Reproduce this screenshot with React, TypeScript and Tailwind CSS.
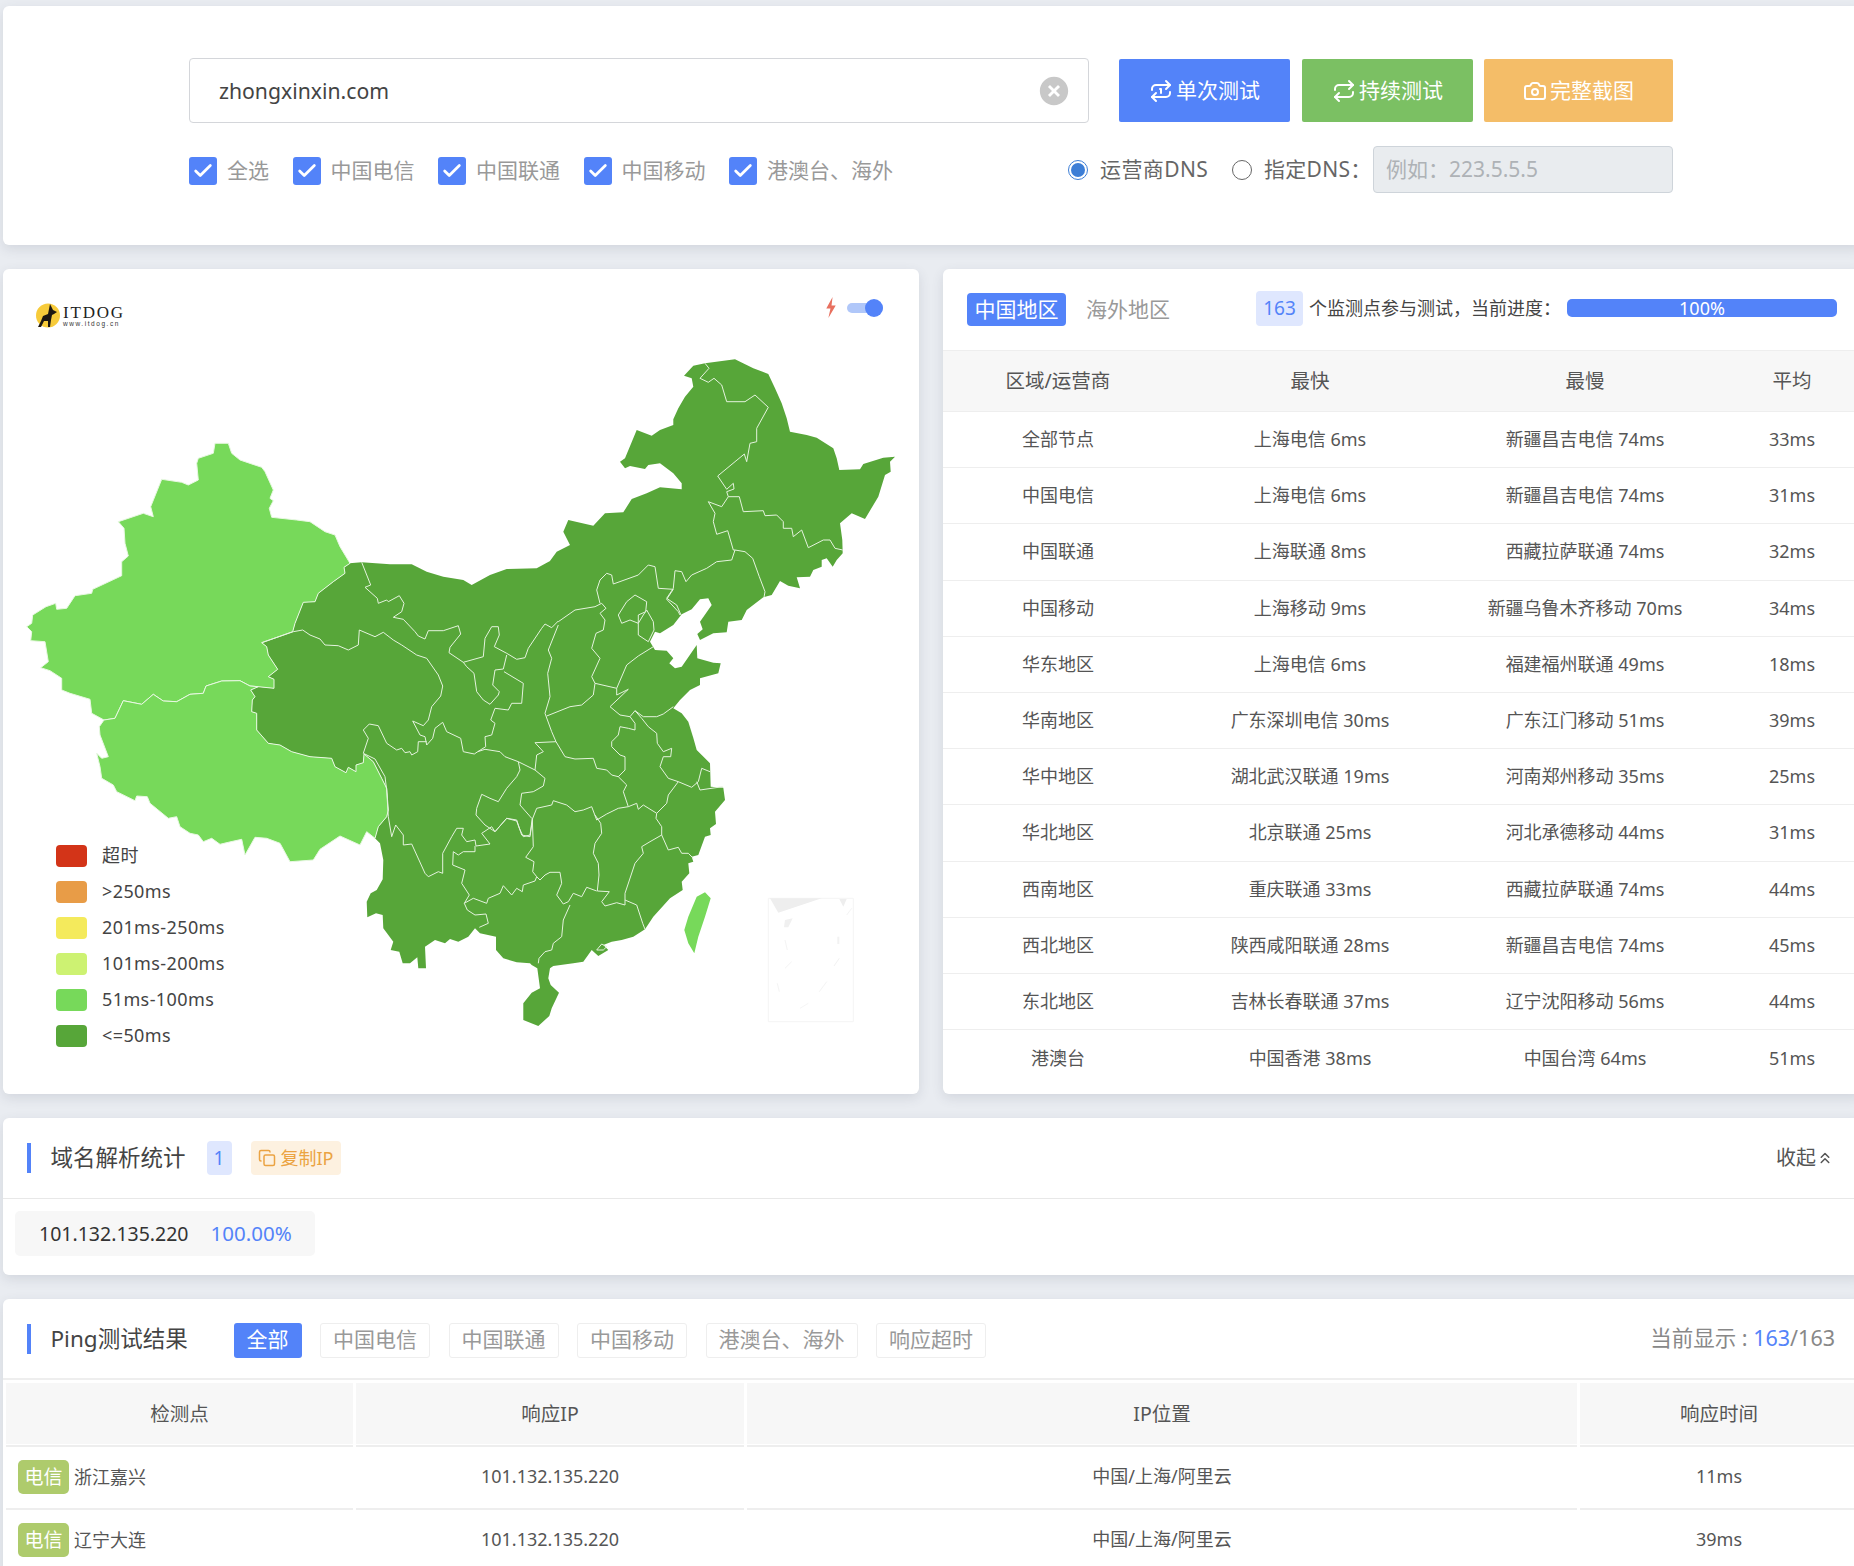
import { RiCloseCircleFill } from "react-icons/ri";
import { Copy, Check, Repeat, Repeat1, Camera, ChevronsUp } from "lucide-react";

const BLUE = "#5383f9";

// map points were read off crops of the picture at 3x, so convert back to page pixels
const at = (ox: number, oy: number, s: string) =>
	s
		.trim()
		.split(/\s+/)
		.map(p => {
			const [x, y] = p.split(",").map(Number);
			return `${(ox + x / 3).toFixed(1)},${(oy + y / 3).toFixed(1)}`;
		})
		.join(" ");
const west = (s: string) => at(20, 430, s);
const north = (s: string) => at(460, 350, s);
const mid = (s: string) => at(250, 560, s);
const south = (s: string) => at(360, 720, s);

const tibetEast =
	"1065,1225 1075,1190 1100,1160 1105,1140 1100,1075 1085,1045 1060,995 1032,972 1030,998 1008,1005 1008,1025 985,1012 978,1028 945,1010 935,985 870,980 815,965 780,945 745,940 710,900 710,850 695,845 697,810 705,800 692,780 715,770";
const xinjiangEast =
	"715,770 762,775 762,748 745,740 773,718 745,675 740,650 725,638 818,605 825,580 850,517 885,515 895,490 940,455 975,430 972,412 990,400";

const xinjiang = west(
	`990,400 960,350 945,315 915,305 870,275 830,270 755,262 748,235 760,212 750,205 760,180 735,125 725,112 660,90 635,70 625,40 585,40 580,70 535,85 530,100 535,150 505,165 485,157 425,148 392,230 400,260 370,250 295,275 312,295 315,340 325,378 305,395 305,437 218,478 215,490 165,497 140,535 110,538 107,520 78,530 38,555 35,580 20,590 35,605 32,632 75,635 85,695 62,713 90,722 125,745 125,780 150,790 210,808 215,850 252,870 285,865 310,812 365,823 400,793 430,813 470,815 510,793 550,790 558,768 605,753 660,752 690,768 ${xinjiangEast}`
);
const tibet = west(
	`252,870 238,890 240,915 265,980 245,985 230,970 240,1010 245,1045 280,1065 290,1085 345,1112 350,1098 382,1100 390,1120 445,1165 470,1160 480,1190 510,1210 535,1215 550,1235 575,1225 600,1243 625,1237 665,1228 675,1275 705,1222 740,1225 780,1240 810,1295 880,1290 900,1258 960,1218 1020,1245 1040,1205 ${tibetEast} 690,768 660,752 605,753 558,768 550,790 510,793 470,815 430,813 400,793 365,823 310,812 285,865`
);

const mainland = [
	mid("335,7 420,13 485,13 530,35 580,50 640,60 665,75 720,45 770,27 860,25 900,3"),
	north(
		"265,640 290,605 330,585 310,545 325,510 400,527 435,490 490,487 515,447 560,430 600,412 665,418 665,400 640,370 600,340 565,345 555,357 510,348 495,355 480,335 495,325 530,240 575,257 600,240 640,225 640,208 655,175 675,140 700,110 695,85 672,77 700,47 735,40 825,28 880,55 925,72 945,115 965,160 980,205 990,245 1040,255 1070,263 1120,295 1130,325 1138,360 1200,358 1210,342 1270,323 1305,320 1290,335 1292,365 1275,375 1255,440 1215,507 1175,490 1140,520 1147,570 1148,610 1130,630 1118,650 1100,625 1085,630 1085,650 1060,660 1050,680 1010,682 1020,715 985,707 960,693 935,735 910,742 860,780 845,810 805,815 800,847 760,850 720,870 712,852 728,838 720,815 755,765 745,745 720,748 695,778 665,793 640,825 600,850 585,845 570,875 585,900 620,902 640,925 628,940 645,955 665,950 710,885 712,925 760,938 782,940 775,970 720,985 720,1005 690,1020 660,1050 640,1075 665,1090 685,1115 700,1165"
	),
	south(
		"985,0 1010,90 1050,130 1052,200 1090,203 1095,240 1065,275 1068,312 1050,325 1052,345 1035,350 1015,405 995,410 1000,425 985,430 988,460 965,485 968,510 930,535 880,590 855,628 820,650 785,660 755,665 730,675 745,690 715,708 695,690 670,725 640,730 580,738 570,745 565,775 572,795 597,818 575,865 568,888 535,918 490,900 490,850 515,818 540,805 532,745 515,735 510,730 470,727 430,715 408,690 408,650 360,640 345,625 325,650 295,665 270,657 255,670 225,660 195,680 198,745 175,745 172,712 150,730 128,730 118,695 92,690 100,665 70,625 68,585 48,580 22,592 20,545 32,520 50,510 68,478 70,420 60,370"
	),
	west(`${tibetEast} ${xinjiangEast}`),
	mid("298,10")
].join(" ");

const borders = [
	// 内蒙古、甘肃、宁夏
	mid("335,7 362,75 345,82 382,115 385,130 410,120 415,125 448,107 462,130 455,155 430,172 460,178 495,215 505,228 525,237 535,212 580,212 625,197 632,222 600,262 597,278 640,307 700,290 705,235 725,200 745,200 748,225 733,260 770,280 800,298 825,293 835,265 875,205 885,192 905,203 925,183"),
	mid("640,307 650,320 672,340 680,395 700,420 720,433 745,405 748,395 728,375 735,330 760,327 770,285"),
	mid("762,335 820,370 815,430 785,430 775,450 735,445 722,480 735,490 725,525 705,530 707,560 683,575 673,582 640,575 632,535 590,515 578,487 555,505 548,535 530,555"),
	// 青海
	mid("35,248 130,215 158,210 180,225 210,237 225,255 265,257 295,270 325,255 328,210 375,230 400,217 430,240 455,255 500,285 530,295 565,345 578,378 572,408 545,440 535,480 520,497 488,483 510,525 525,530 530,555"),
	mid("340,580 355,535 340,510 358,492 385,497 410,550 440,570 455,565 465,578 480,575 485,585 503,575 505,545 530,545"),
	mid("340,580 375,597 405,650 410,690 415,770"),
	// 四川、重庆
	mid("683,575 705,568 750,575 765,590 805,605 855,630"),
	mid("805,605 810,630 800,650 770,685 745,725 720,715 695,703 680,745 678,765 705,795 735,815 770,775 800,780 815,825 840,830 848,775"),
	mid("855,630 885,655 880,678 850,695 815,700 810,735 845,775"),
	// 陕西、山西、河南
	mid("925,195 895,270 905,295 893,340 900,410 885,460 905,515 918,545"),
	mid("925,185 975,150 1035,140 1055,130 1068,145 1050,160 1065,180 1060,210 1038,220 1025,265 1050,295 1025,350 1035,370 1100,385"),
	mid("890,468 960,440 995,435 1030,405 1035,370"),
	mid("918,545 945,590 975,597 1030,595 1040,625 1070,630 1085,645 1105,650"),
	mid("918,545 855,548 880,575 860,585 855,630"),
	// 湖北、安徽、江苏、山东
	mid("848,775 860,745 905,735 910,722 950,735 975,755 1000,750 1025,740 1040,780 1070,762 1105,745 1135,740"),
	mid("1105,650 1130,675 1120,695 1135,740 1160,730 1165,748 1180,735 1220,760"),
	mid("1105,650 1125,630 1125,590 1110,585 1085,560 1085,545 1105,525 1110,500 1135,505 1155,510 1155,490 1140,470 1110,465 1080,440 1135,388 1100,405 1100,385 1130,315 1165,288 1210,260"),
	mid("1140,470 1155,452 1175,475 1195,500 1220,520 1222,550 1240,575 1265,565 1262,590 1240,590 1230,620 1255,655 1285,665 1325,682 1345,665 1355,625 1380,635"),
	mid("1340,665 1350,690 1418,680"),
	mid("1285,665 1255,705 1250,730 1220,760"),
	mid("1155,452 1180,470 1220,470 1240,462 1270,440"),
	// 河北、北京、天津
	mid("1050,130 1040,90 1050,60 1070,40 1085,45 1090,72 1165,45 1195,15 1215,20 1225,85 1270,88 1250,118 1285,155 1290,165"),
	mid("1105,165 1130,125 1155,105 1190,125 1187,155 1165,165 1165,190 1140,180 1115,190 1105,165"),
	mid("1190,150 1210,185 1212,210 1195,245 1165,225 1165,190 1180,165 1190,150"),
	// 东北
	north("735,40 747,55 720,85 745,97 762,85 785,105 800,155 855,155 885,135 925,172 890,235 890,275 870,280 860,335 853,312 773,378 800,418 820,400 822,417 800,425 805,440 838,440 850,485 910,482 915,497 950,495 970,515 970,535 995,535 1000,560 1025,540 1045,593 1090,570 1110,570 1125,595 1148,600"),
	north("805,440 785,470 745,455 765,490 760,515 770,553 803,542 820,600 825,600 855,605 878,625 898,680 915,725 912,742"),
	north("825,600 815,630 770,635 740,655 695,675 678,695 665,665 645,662 640,715 620,745 650,765 663,795"),
	// 西南
	south("85,290 95,350 107,315 130,345 130,375 155,372 195,460 205,470 235,455 248,460 248,400 275,350 290,325 310,325 305,345 320,365 345,360 348,378 390,372 365,340 395,320 405,335 440,295 470,303 478,325 490,350 510,345 517,295"),
	south("345,378 345,395 310,395 295,405 280,395 278,435 315,450 305,490 328,525 313,550 340,535 380,550 385,535 420,520 430,497 455,525 470,505 487,515 490,495 525,483 530,470 540,480 555,465 570,457 600,457 605,490 590,525 610,552 625,545 640,520 665,530 680,502 710,513"),
	south("313,550 322,570 345,585 378,582 385,610 358,622"),
	south("630,555 610,600 605,650 580,670 575,690 555,695 537,715 535,730"),
	south("517,295 520,380 497,412 522,425 518,455 530,470"),
	south("705,285 722,310 725,340 705,370 700,400 715,430 717,465 712,513 748,515 725,545 735,558 770,548 795,555"),
	south("795,555 795,520 825,430 850,400 845,380 870,365 905,345 925,390 955,382 965,400 985,400 1000,415"),
	south("795,540 830,555 848,610 855,628"),
	south("905,345 905,320 888,295 890,280"),
	south("710,690 725,672 740,680 730,690 710,690")
];

const taiwan = south("1035,517 1052,535 1035,590 1015,650 1003,700 985,670 973,630 985,590 1010,530");

const ChinaMap = () => (
	<svg viewBox="3 269 916 825" className="absolute left-0 top-0 w-[916px] h-[825px]">
		<polygon points={mainland} fill="#57a639" />
		<polygon points={xinjiang} fill="#77d95a" stroke="#e8f8e2" strokeWidth="1" strokeLinejoin="round" />
		<polygon points={tibet} fill="#77d95a" stroke="#e8f8e2" strokeWidth="1" strokeLinejoin="round" />
		{borders.map((b, i) => (
			<polyline key={i} points={b} fill="none" stroke="#e4f3dd" strokeWidth="1" strokeLinejoin="round" />
		))}
		<polygon points={taiwan} fill="#77d95a" />
		{/* 南海诸岛小图 */}
		<polygon points={south("1225,535 1480,535 1480,905 1225,905")} fill="none" stroke="#f4f4f4" strokeWidth="1" />
		<polygon points={south("1230,535 1385,535 1255,578")} fill="#eeeeee" />
		<polygon points={south("1438,537 1460,537 1450,560")} fill="#eeeeee" />
		<polygon points={south("1275,600 1298,595 1285,622 1272,622")} fill="#f0f0f0" />
		<polyline points={south("1475,565 1460,585")} stroke="#f4f4f4" fill="none" />
		<polyline points={south("1435,650 1435,672")} stroke="#f2f2f2" strokeWidth="2" fill="none" />
		<polyline points={south("1275,660 1282,690")} stroke="#f4f4f4" fill="none" />
		<polyline points={south("1295,725 1275,745")} stroke="#f4f4f4" fill="none" />
		<polyline points={south("1438,715 1422,738")} stroke="#f2f2f2" fill="none" />
		<polyline points={south("1400,785 1378,815")} stroke="#f4f4f4" fill="none" />
		<polyline points={south("1252,790 1258,815")} stroke="#f4f4f4" fill="none" />
		<polyline points={south("1345,850 1320,865")} stroke="#f6f6f6" fill="none" />
	</svg>
);

const Logo = () => (
	<div className="flex items-center gap-[2px] pl-[1px]">
		<svg viewBox="0 0 26 26" className="w-[26px] h-[26px]">
			<circle cx="13" cy="12.5" r="12" fill="#f7cb3a" />
			<polygon
				points="15,1 17,5 18,7 22,9 19,11 17,12 16,17 15,24 13,24 13,18 9,18 6,24 3,24 6,18 8,13 13,11 14,6"
				fill="#1c1712"
			/>
		</svg>
		<div className="flex flex-col">
			<span className="font-['Liberation_Serif',serif] text-[17px] leading-[14px] tracking-[1.8px] text-[#222]">
				ITDOG
			</span>
			<span className="font-['Liberation_Sans',sans-serif] text-[6.5px] leading-[7px] tracking-[1.55px] text-[#333]">
				www.itdog.cn
			</span>
		</div>
	</div>
);

const checks = ["全选", "中国电信", "中国联通", "中国移动", "港澳台、海外"];

const legend = [
	{ label: "超时", color: "bg-[#d33418]" },
	{ label: ">250ms", color: "bg-[#e89c47]" },
	{ label: "201ms-250ms", color: "bg-[#f4ea5c]" },
	{ label: "101ms-200ms", color: "bg-[#cdf272]" },
	{ label: "51ms-100ms", color: "bg-[#77d95a]" },
	{ label: "<=50ms", color: "bg-[#57a639]" }
];

const summary = [
	["全部节点", "上海电信 6ms", "新疆昌吉电信 74ms", "33ms"],
	["中国电信", "上海电信 6ms", "新疆昌吉电信 74ms", "31ms"],
	["中国联通", "上海联通 8ms", "西藏拉萨联通 74ms", "32ms"],
	["中国移动", "上海移动 9ms", "新疆乌鲁木齐移动 70ms", "34ms"],
	["华东地区", "上海电信 6ms", "福建福州联通 49ms", "18ms"],
	["华南地区", "广东深圳电信 30ms", "广东江门移动 51ms", "39ms"],
	["华中地区", "湖北武汉联通 19ms", "河南郑州移动 35ms", "25ms"],
	["华北地区", "北京联通 25ms", "河北承德移动 44ms", "31ms"],
	["西南地区", "重庆联通 33ms", "西藏拉萨联通 74ms", "44ms"],
	["西北地区", "陕西咸阳联通 28ms", "新疆昌吉电信 74ms", "45ms"],
	["东北地区", "吉林长春联通 37ms", "辽宁沈阳移动 56ms", "44ms"],
	["港澳台", "中国香港 38ms", "中国台湾 64ms", "51ms"]
];

const pingRows = [
	{ name: "浙江嘉兴", time: "11ms" },
	{ name: "辽宁大连", time: "39ms" }
];

const filters = ["中国电信", "中国联通", "中国移动", "港澳台、海外", "响应超时"];

const card = "bg-white rounded-[6px] shadow-[0_4px_12px_rgba(60,70,90,0.13)]";
const pingGrid = "grid grid-cols-[347px_388px_830px_278px] gap-x-[3px] pl-[3px]";

const App = () => {
	return (
		<div className="w-[1854px] h-[1566px] overflow-hidden bg-[#e9ecf1] font-['Noto_Sans','Noto_Sans_CJK_SC',sans-serif]">
			<div className="w-[1863px] pl-[3px] pt-[6px] flex flex-col">
				{/* 测试表单 */}
				<div className={`${card} h-[239px] pt-[52px] pl-[186px] pr-[190px]`}>
					<div className="flex items-center">
						<div className="w-[900px] h-[65px] flex items-center justify-between border border-[#d4d6da] rounded-[4px] pl-[29px] pr-[20px] text-[21.2px] text-[#444]">
							<span className="pt-[1px]">zhongxinxin.com</span>
							<RiCloseCircleFill className="w-[34px] h-[34px] text-[#c8c8c8] mr-[-3px]" />
						</div>
						<button className="ml-[30px] w-[171px] h-[63px] bg-[#5383f9] rounded-[2px] text-white text-[21px] flex items-center justify-center gap-[3px]">
							<Repeat1 className="w-[24px] h-[24px]" strokeWidth={2} />
							单次测试
						</button>
						<button className="ml-[12px] w-[171px] h-[63px] bg-[#7bc063] rounded-[2px] text-white text-[21px] flex items-center justify-center gap-[3px]">
							<Repeat className="w-[24px] h-[24px]" strokeWidth={2} />
							持续测试
						</button>
						<button className="ml-[11px] w-[189px] h-[63px] bg-[#f4bd68] rounded-[2px] text-white text-[21px] flex items-center justify-center gap-[3px]">
							<Camera className="w-[24px] h-[24px]" strokeWidth={2} />
							完整截图
						</button>
					</div>
					<div className="flex items-center justify-between mt-[23px]">
						<div className="flex items-center gap-[23.5px] mt-[3px]">
							{checks.map(c => (
								<label key={c} className="flex items-center gap-[10px] text-[21px] text-[#999]">
									<span className="w-[28px] h-[28px] rounded-[3px] bg-[#5383f9] flex items-center justify-center">
										<Check className="w-[22px] h-[22px] text-white" strokeWidth={3} />
									</span>
									{c}
								</label>
							))}
						</div>
						<div className="flex items-center text-[21px] text-[#666] whitespace-nowrap">
							<span className="w-[20px] h-[20px] rounded-full border border-[#3d7ed6] flex items-center justify-center">
								<span className="w-[14px] h-[14px] rounded-full bg-[#3d7ed6]" />
							</span>
							<span className="ml-[12px] w-[108px] tracking-[0.4px]">运营商DNS</span>
							<span className="ml-[24px] w-[20px] h-[20px] rounded-full border border-[#666]" />
							<span className="ml-[12px] w-[109px] tracking-[0.3px]">指定DNS：</span>
							<div className="w-[300px] h-[47px] flex items-center bg-[#e9ecef] border border-[#ced4da] rounded-[4px] pl-[12px] text-[21px] text-[#aeb2b6]">
								例如：223.5.5.5
							</div>
						</div>
					</div>
				</div>

				<div className="flex gap-[24px] mt-[24px]">
					{/* 地图 */}
					<div className={`${card} relative w-[916px] h-[825px] shrink-0`}>
						<ChinaMap />
						<div className="relative flex items-start justify-between pl-[31px] pr-[36px] pt-[28px]">
							<div className="mt-[6px]">
								<Logo />
							</div>
							<div className="flex items-center gap-[11px]">
								<svg viewBox="0 0 9 20" className="w-[10px] h-[21px]">
									<polygon points="6,0 0,11 4,11 2,20 9,8 5,8" fill="#e8705f" />
								</svg>
								<span className="relative w-[36px] h-[10px] rounded-full bg-[#b0c7f9]">
									<span className="absolute right-0 top-[-4px] w-[18px] h-[18px] rounded-full bg-[#5383f9]" />
								</span>
							</div>
						</div>
						<div className="absolute left-[53px] top-[575.5px] flex flex-col gap-[14px]">
							{legend.map(l => (
								<div key={l.label} className="flex items-center h-[22px] text-[18px] tracking-[0.4px] text-[#444]">
									<span className={`w-[31px] h-[22px] rounded-[4px] ${l.color}`} />
									<span className="ml-[15px]">{l.label}</span>
								</div>
							))}
						</div>
					</div>

					{/* 区域汇总 */}
					<div className={`${card} w-[920px] h-[825px] shrink-0`}>
						<div className="h-[82px] flex items-center pl-[24px] border-b border-[#eeeeee] whitespace-nowrap">
							<span className="w-[99px] h-[33px] shrink-0 flex items-center justify-center rounded-[4px] bg-[#5383f9] text-white text-[21px]">
								中国地区
							</span>
							<span className="ml-[20px] w-[83px] shrink-0 text-[21px] text-[#999]">海外地区</span>
							<div className="flex items-center mb-[3px]">
								<span className="ml-[87px] w-[47px] h-[35px] shrink-0 flex items-center justify-center rounded-[4px] bg-[#dfe7fe] text-[#5383f9] text-[19px]">
									163
								</span>
								<span className="ml-[6px] w-[252px] shrink-0 text-[18px] text-[#444]">个监测点参与测试，当前进度：</span>
								<div className="ml-[6px] w-[270px] h-[18px] shrink-0 rounded-[5px] bg-[#5383f9] flex items-center justify-center text-white text-[18px]">
									100%
								</div>
							</div>
						</div>
						<div className="grid grid-cols-[230px_274px_276px_138px] h-[61px] items-center text-center text-[19.5px] text-[#555] bg-[#f7f7f7] border-b border-[#eeeeee]">
							<span>区域/运营商</span>
							<span>最快</span>
							<span>最慢</span>
							<span>平均</span>
						</div>
						{summary.map((row, i) => (
							<div
								key={row[0]}
								className={`grid grid-cols-[230px_274px_276px_138px] h-[56.2px] items-center text-center text-[18px] text-[#555] ${
									i < summary.length - 1 ? "border-b border-[#eeeeee]" : ""
								}`}
							>
								{row.map((cell, j) => (
									<span key={j}>{cell}</span>
								))}
							</div>
						))}
					</div>
				</div>

				{/* 域名解析统计 */}
				<div className={`${card} h-[157px] mt-[24px]`}>
					<div className="h-[81px] flex items-center justify-between pl-[24px] pr-[29px] border-b border-[#e8e8e8]">
						<div className="flex items-center">
							<span className="w-[3.5px] h-[30px]" style={{ backgroundColor: BLUE }} />
							<span className="ml-[20px] text-[22.5px] text-[#444]">域名解析统计</span>
							<span className="ml-[21px] w-[25px] h-[34px] flex items-center justify-center rounded-[4px] bg-[#dfe7fe] text-[#5383f9] text-[19px]">
								1
							</span>
							<span className="ml-[19px] w-[90px] h-[34px] flex items-center justify-center gap-[5px] rounded-[4px] bg-[#fdf1e0] text-[#eba342] text-[18px]">
								<Copy className="w-[18px] h-[18px]" />
								复制IP
							</span>
						</div>
						<span className="flex items-center text-[20px] text-[#555]">
							收起
							<ChevronsUp className="w-[18px] h-[18px]" strokeWidth={2} />
						</span>
					</div>
					<div className="pl-[12px] pt-[12px]">
						<div className="w-[300px] h-[45px] flex items-center rounded-[5px] bg-[#f7f7f7] pl-[24px] text-[19.5px]">
							<span className="text-[#333]">101.132.135.220</span>
							<span className="ml-[22px] text-[20.5px] text-[#5383f9]">100.00%</span>
						</div>
					</div>
				</div>

				{/* Ping 结果 */}
				<div className={`${card} mt-[24px]`}>
					<div className="h-[81px] flex items-center justify-between pl-[24px] pr-[28px] border-b-2 border-[#eeeeee]">
						<div className="flex items-center">
							<span className="w-[3.5px] h-[30px]" style={{ backgroundColor: BLUE }} />
							<span className="ml-[20px] w-[164px] text-[22.5px] text-[#444]">Ping测试结果</span>
							<span className="ml-[19px] mt-[3px] w-[68px] h-[35px] flex items-center justify-center rounded-[3px] bg-[#5383f9] text-white text-[21px]">
								全部
							</span>
							{filters.map(f => (
								<span
									key={f}
									className="ml-[18.5px] mt-[3px] h-[35px] px-[12px] flex items-center rounded-[3px] border border-[#eeeeee] text-[21px] text-[#999]"
								>
									{f}
								</span>
							))}
						</div>
						<span className="text-[21.5px] text-[#888]">
							当前显示 : <span className="text-[#5383f9]">163</span>/163
						</span>
					</div>
					<div className={`${pingGrid} pt-[3px] text-[19.5px] text-[#555] text-center`}>
						{["检测点", "响应IP", "IP位置", "响应时间"].map(h => (
							<div key={h} className="h-[64px] pb-[3px] border-b-2 border-[#eeeeee]">
								<div className="h-[61px] bg-[#f7f7f7] flex items-center justify-center">{h}</div>
							</div>
						))}
					</div>
					{pingRows.map(r => (
						<div key={r.name} className={`${pingGrid} text-[18px] text-[#555] text-center`}>
							<div className="h-[63px] pb-[1px] flex items-center pl-[12px] gap-[5px] border-b-2 border-[#eeeeee]">
								<span className="w-[51px] h-[34px] flex items-center justify-center rounded-[5px] bg-[#aecb6c] text-white text-[19px]">
									电信
								</span>
								{r.name}
							</div>
							<div className="h-[63px] pb-[2px] flex items-center justify-center border-b-2 border-[#eeeeee]">101.132.135.220</div>
							<div className="h-[63px] pb-[2px] flex items-center justify-center border-b-2 border-[#eeeeee]">中国/上海/阿里云</div>
							<div className="h-[63px] pb-[2px] flex items-center justify-center border-b-2 border-[#eeeeee]">{r.time}</div>
						</div>
					))}
				</div>
			</div>
		</div>
	);
};

export default App;
